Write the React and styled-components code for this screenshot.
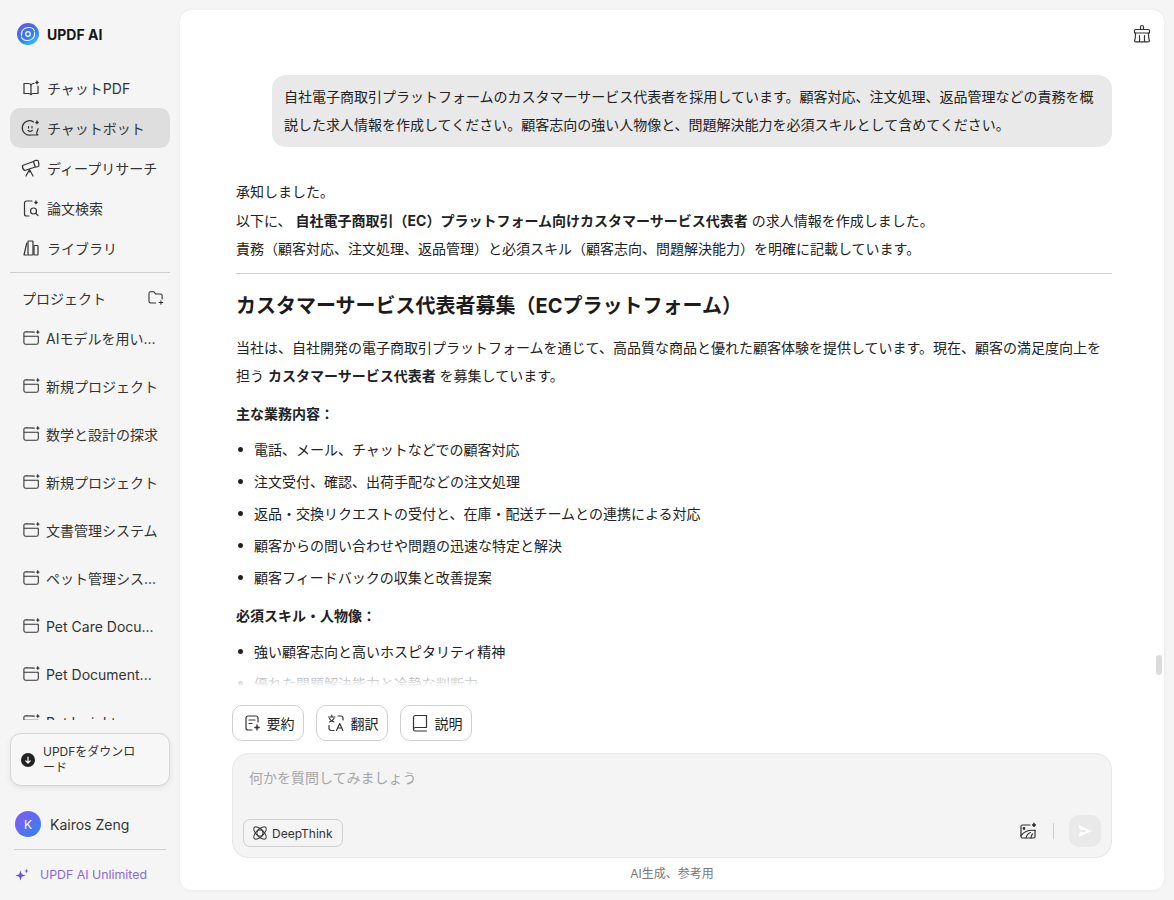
import React from "react";
import styled, { createGlobalStyle } from "styled-components";

const Global = createGlobalStyle`
  html, body { margin: 0; padding: 0; height: 100%; }
  body {
    background: #f5f5f5;
    color: #222222;
    font-family: "Inter", "Noto Sans CJK JP", sans-serif;
    font-size: 14px;
    overflow: hidden;
  }
  * { box-sizing: border-box; }
`;

const Page = styled.div`
  display: flex;
  width: 1174px;
  height: 900px;
`;

const Sidebar = styled.aside`
  width: 180px;
  height: 900px;
  flex: none;
  display: flex;
  flex-direction: column;
  padding: 0 10px;
`;

const Brand = styled.div`
  height: 68px;
  display: flex;
  align-items: center;
  gap: 7px;
  padding-left: 6px;
  font-size: 14px;
  font-weight: 700;
  color: #161616;
`;

const Nav = styled.nav`
  display: flex;
  flex-direction: column;
`;

const NavItem = styled.div`
  height: 40px;
  display: flex;
  align-items: center;
  gap: 6px;
  padding-left: 11px;
  border-radius: 10px;
  color: #333333;
  white-space: nowrap;
  background: ${(p) => (p.$active ? "#dedede" : "transparent")};
`;

const Rule = styled.div`
  height: 1px;
  flex: none;
  background: #cfcfcf;
  margin: ${(p) => p.$margin};
`;

const ProjectHead = styled.div`
  height: 20px;
  display: flex;
  align-items: center;
  justify-content: space-between;
  padding: 0 5px 0 12px;
  margin-top: 15px;
  font-size: 14px;
  color: #333333;
`;

const ProjectList = styled.div`
  height: 406px;
  flex: none;
  margin-top: 6px;
  overflow: hidden;
  display: flex;
  flex-direction: column;
`;

const ProjectItem = styled.div`
  height: 48px;
  flex: none;
  display: flex;
  align-items: center;
  gap: 5px;
  padding-left: 13px;
  color: #333333;
  white-space: nowrap;
`;

const Download = styled.div`
  height: 53px;
  flex: none;
  margin-top: 13px;
  display: flex;
  align-items: center;
  gap: 8px;
  padding: 0 28px 0 10px;
  border: 1px solid #d6d6d6;
  border-radius: 11px;
  background: #f7f7f7;
  box-shadow: 0 2px 6px rgba(0, 0, 0, 0.08);
  font-size: 12px;
  line-height: 16px;
  color: #333333;
`;

const DownloadDot = styled.span`
  width: 14px;
  height: 14px;
  flex: none;
  border-radius: 50%;
  background: #222222;
  display: flex;
  align-items: center;
  justify-content: center;
`;

const Profile = styled.div`
  height: 26px;
  flex: none;
  margin-top: 25px;
  display: flex;
  align-items: center;
  gap: 9px;
  padding-left: 5px;
  color: #333333;
  font-size: 14px;
`;

const Avatar = styled.span`
  width: 26px;
  height: 26px;
  border-radius: 50%;
  background: linear-gradient(135deg, #8a55f5, #2a86ee);
  color: #ffffff;
  font-size: 12px;
  display: flex;
  align-items: center;
  justify-content: center;
`;

const Unlimited = styled.div`
  display: flex;
  align-items: center;
  gap: 11px;
  padding-left: 5px;
  font-size: 12.35px;
  color: #8a68e4;
`;

const Main = styled.main`
  position: relative;
  width: 984px;
  height: 880px;
  margin-top: 10px;
  flex: none;
  background: #ffffff;
  border-radius: 12px;
  box-shadow: 0 0 4px rgba(0, 0, 0, 0.05);
  display: flex;
  flex-direction: column;
  padding: 0 52px;
`;

const CleanButton = styled.button`
  position: absolute;
  top: 14px;
  right: 12px;
  padding: 0;
  border: 0;
  background: none;
  display: flex;
`;

const Thumb = styled.div`
  position: absolute;
  top: 645px;
  right: 2px;
  width: 6px;
  height: 20px;
  border-radius: 3px;
  background: #dcdcdc;
`;

const Scroller = styled.div`
  position: relative;
  height: 680px;
  flex: none;
  overflow: hidden;
  padding: 65px 0 0 4px;
`;

const Fade = styled.div`
  position: absolute;
  left: 0;
  right: 0;
  bottom: 0;
  height: 32px;
  background: linear-gradient(rgba(255, 255, 255, 0), #ffffff 90%);
`;

const Bubble = styled.div`
  margin-left: 36px;
  padding: 8px 12px;
  background: #e9e9e9;
  border-radius: 14px;
  line-height: 28px;
  color: #222222;
`;

const Answer = styled.div`
  margin-top: 31px;
`;

const Intro = styled.p`
  margin: 0;
  line-height: 28.5px;
`;

const Divider = styled.hr`
  margin: 9px 0 0;
  border: 0;
  height: 1px;
  background: #cfcfcf;
`;

const Heading = styled.h2`
  margin: 17px 0 0;
  font-size: 20px;
  line-height: 30px;
  font-weight: 700;
  color: #1c1c1c;
`;

const Para = styled.p`
  margin: 13px 0 0;
  line-height: 28px;
`;

const Label = styled.p`
  margin: ${(p) => p.$top}px 0 0;
  line-height: 24px;
  font-weight: 700;
`;

const Bullets = styled.ul`
  margin: 8px 0 0;
  padding: 0 0 0 18px;
  list-style: none;
`;

const Bullet = styled.li`
  position: relative;
  line-height: 32px;
  &::before {
    content: "";
    position: absolute;
    left: -16px;
    top: 13px;
    width: 5px;
    height: 5px;
    border-radius: 50%;
    background: #222222;
  }
`;

const Actions = styled.div`
  display: flex;
  gap: 12px;
  height: 36px;
  flex: none;
  margin-top: 15px;
`;

const ActionButton = styled.button`
  width: 72px;
  height: 36px;
  padding: 0;
  border: 1px solid #cfcfcf;
  border-radius: 10px;
  background: #ffffff;
  color: #222222;
  font: inherit;
  display: flex;
  align-items: center;
  justify-content: center;
  gap: 5px;
`;

const Composer = styled.div`
  height: 105px;
  flex: none;
  margin-top: 12px;
  padding: 14px 10px 10px;
  display: flex;
  flex-direction: column;
  justify-content: space-between;
  border: 1px solid #e8e8e8;
  border-radius: 16px;
  background: #f4f4f4;
`;

const Placeholder = styled.div`
  padding-left: 6px;
  color: #a6a6a6;
  line-height: 20px;
`;

const ComposerBar = styled.div`
  display: flex;
  align-items: flex-end;
  justify-content: space-between;
`;

const DeepThink = styled.button`
  height: 28px;
  padding: 0 9px 0 8px;
  border: 1px solid #cfcfcf;
  border-radius: 7px;
  background: #f4f4f4;
  color: #333333;
  font: inherit;
  font-size: 12px;
  display: flex;
  align-items: center;
  gap: 4px;
`;

const Tools = styled.div`
  display: flex;
  align-items: center;
  gap: 15px;
`;

const ToolRule = styled.span`
  width: 1px;
  height: 16px;
  background: #cdcdcd;
`;

const Send = styled.button`
  width: 32px;
  height: 32px;
  padding: 0;
  border: 0;
  border-radius: 10px;
  background: #e9e9e9;
  display: flex;
  align-items: center;
  justify-content: center;
`;

const Note = styled.div`
  margin-top: 8px;
  text-align: center;
  font-size: 12px;
  line-height: 16px;
  color: #777777;
`;

const Ico = ({ size = 20, children }) => (
  <svg width={size} height={size} viewBox="0 0 20 20" fill="none" stroke="#333" strokeWidth="1.2" strokeLinecap="round" strokeLinejoin="round" style={{ flex: "none" }}>
    {children}
  </svg>
);

const Spark = ({ x = 16, y = 4, r = 1.7 }) => (
  <path d={`M${x} ${y - r}l${r * 0.45} ${r * 0.55} ${r * 0.55} ${r * 0.45}-${r * 0.55} ${r * 0.45}-${r * 0.45} ${r * 0.55}-${r * 0.45}-${r * 0.55}-${r * 0.55}-${r * 0.45} ${r * 0.55}-${r * 0.45}z`} fill="#333" stroke="#333" strokeWidth="0.6" />
);

const Logo = () => (
  <svg width="24" height="24" viewBox="0 0 24 24" fill="none" style={{ flex: "none" }}>
    <defs>
      <linearGradient id="lg" x1="0.1" y1="0" x2="0.8" y2="1">
        <stop offset="0" stopColor="#6a55e8" />
        <stop offset="0.6" stopColor="#2f7cf5" />
        <stop offset="1" stopColor="#3fc0fa" />
      </linearGradient>
      <filter id="soft" x="-10%" y="-10%" width="120%" height="120%">
        <feGaussianBlur stdDeviation="0.6" />
      </filter>
    </defs>
    <circle cx="12" cy="12" r="11" fill="url(#lg)" filter="url(#soft)" />
    <path d="M5.500 13.500C4.500 8.500 9 5 13.500 5.500c2.500.3 4.500 1.800 5 3.500" stroke="#e6f4ff" strokeWidth="1.1" strokeLinecap="round" />
    <path d="M18.500 10.500c1 5-3.500 8.500-8 8-2.500-.3-4.500-1.800-5-3.500" stroke="#e6f4ff" strokeWidth="1.1" strokeLinecap="round" />
    <circle cx="12" cy="12" r="2.300" stroke="#ffffff" strokeWidth="1.2" />
  </svg>
);

const BookIcon = () => (
  <Ico>
    <path d="M13 5.500h-.5c-1 0-2 .6-2.500 1.600-.5-1-1.500-1.600-2.500-1.600H3V15.500h4.500c1 0 2 .4 2.500 1 .5-.6 1.500-1 2.500-1H17V8" />
    <path d="M10 7.100v9.400" />
    <Spark x={16} y={4.500} />
  </Ico>
);
const BotIcon = () => (
  <Ico>
    <path d="M12.500 4A7.200 7.200 0 1 0 10 17h7c-1-.7-1.500-1.600-1.300-2.700.7-1 1.200-2.200 1.300-3.600" />
    <path d="M7.500 8.500v1.500M11 8.500v1.500M7 12.500c1.300 1 3 1 4.300 0" />
    <Spark x={16} y={4.500} />
  </Ico>
);
const ScopeIcon = () => (
  <Ico>
    <path d="M1.500 7.500l11-4 1.800 5.500-10.500 3.500c-1.500-.8-2.500-3-2.300-5z" />
    <path d="M12.500 3.500c1-1 3.500-1.500 4.500-1 .8 1.600 1.200 4 .8 5.600-.8.700-2 1-3.500.9" />
    <path d="M8.500 11.500L5 18M8.500 11.500L12 18M8.500 11.500v2.500" />
  </Ico>
);
const SearchDocIcon = () => (
  <Ico>
    <path d="M11 3H5.500a2 2 0 0 0-2 2v11a2 2 0 0 0 2 2H8" />
    <circle cx="12.500" cy="13" r="3" />
    <path d="M14.800 15.300l2.200 2.200" />
    <Spark x={15} y={4.500} />
  </Ico>
);
const LibraryIcon = () => (
  <Ico>
    <path d="M5.800 5L3 17h3.200" />
    <rect x="7" y="3" width="5" height="14" rx="0.700" />
    <rect x="13" y="7.500" width="4" height="9.500" rx="0.700" />
  </Ico>
);
const FolderSpark = () => (
  <Ico size={18}>
    <path d="M12.500 3.500L3 3a2 2 0 0 0-2 2v10a2 2 0 0 0 2 2h12a2 2 0 0 0 2-2V8H1" />
    <Spark x={16.500} y={3.500} r={1.700} />
  </Ico>
);
const FolderPlus = () => (
  <Ico size={18}>
    <path d="M9.500 15.500H4a1.800 1.800 0 0 1-1.800-1.800v-9A1.800 1.800 0 0 1 4 3h3.500l2 2.500H15A1.800 1.800 0 0 1 16.800 7.300V11" />
    <path d="M15.500 13v4M13.500 15h4" />
  </Ico>
);
const ArrowDown = () => (
  <svg width="8" height="8" viewBox="0 0 8 8" fill="none" stroke="#fff" strokeWidth="1.200" strokeLinecap="round" strokeLinejoin="round">
    <path d="M4 1v6M1.800 4.800L4 7l2.200-2.200" />
  </svg>
);
const Sparkles = () => (
  <svg width="14" height="14" viewBox="0 0 14 14" fill="#6d4fe0" style={{ flex: "none" }}>
    <path d="M5.500 2.500l1.300 3.700 3.700 1.300-3.700 1.300-1.300 3.700-1.300-3.700L.5 7.500l3.700-1.300z" />
    <path d="M11.500 .8l.6 1.600 1.600.6-1.600.6-.6 1.600-.6-1.600-1.600-.6 1.600-.6z" />
  </svg>
);
const BroomIcon = () => (
  <Ico size={20}>
    <path d="M8.500 5.500V3a1.500 1.500 0 0 1 3 0v2.500" />
    <path d="M3.500 5.500h13a1 1 0 0 1 1 1V9h-15V6.500a1 1 0 0 1 1-1z" />
    <path d="M3.500 9c.2 3-.2 5.800-.9 8 .1.500.4.800 1 .8h12.800c.6 0 .9-.3 1-.8-.7-2.200-1.100-5-.9-8" />
    <path d="M7.500 11.500v6M12.500 11.500v6" />
  </Ico>
);
const SummaryIcon = () => (
  <Ico size={20}>
    <path d="M16 9V5a2 2 0 0 0-2-2H6a2 2 0 0 0-2 2v10a2 2 0 0 0 2 2h4" />
    <path d="M7 7h6M7 10.500h3" />
    <path d="M15 11.500l.8 2.200 2.200.8-2.200.8-.8 2.200-.8-2.200-2.200-.8 2.200-.8z" fill="#333" strokeWidth="0.500" />
  </Ico>
);
const TranslateIcon = () => (
  <Ico size={20}>
    <path d="M2.500 4h6.500M5.800 2.200V4M3.500 5.500c.7 1.500 2.700 3 4.500 3.500M8 5.500C7.300 7 5.300 8.500 3.500 9" />
    <path d="M12 3h3a2 2 0 0 1 2 2v2" />
    <path d="M8 17.500H5a2 2 0 0 1-2-2v-3" />
    <path d="M10.500 17.500l3.200-7 3.200 7M11.700 15h4" />
  </Ico>
);
const ExplainIcon = () => (
  <Ico size={20}>
    <path d="M3.500 16V4.500a2 2 0 0 1 2-2h11v12H5.500a2 2 0 0 0-2 2 1.500 1.500 0 0 0 1.500 1.500h11.500" />
  </Ico>
);
const AtomIcon = () => (
  <Ico size={16}>
    <ellipse cx="10" cy="10" rx="4.500" ry="10" transform="rotate(45 10 10)" />
    <ellipse cx="10" cy="10" rx="4.500" ry="10" transform="rotate(-45 10 10)" />
    <circle cx="10" cy="10" r="4" />
  </Ico>
);
const ImageIcon = () => (
  <Ico size={20}>
    <path d="M12 4H4.500A1.500 1.500 0 0 0 3 5.500v10A1.500 1.500 0 0 0 4.500 17h11a1.500 1.500 0 0 0 1.500-1.500V9" />
    <path d="M3 14.500c3-3.500 8-6 14-5M8 17c.5-2.500 2-4.500 4.500-5.500M13 17c0-1.500 .5-3 1.500-4" />
    <circle cx="6" cy="7.500" r="0.800" fill="#333" />
    <Spark x={16} y={4} r={2} />
  </Ico>
);
const PlaneIcon = () => (
  <svg width="16" height="16" viewBox="0 0 16 16" fill="#ffffff">
    <path d="M1.500 2l13.500 6-13.500 6 1.500-5h5.500V7H3z" />
  </svg>
);

const navItems = [
  { label: "チャットPDF", icon: <BookIcon /> },
  { label: "チャットボット", icon: <BotIcon />, active: true },
  { label: "ディープリサーチ", icon: <ScopeIcon /> },
  { label: "論文検索", icon: <SearchDocIcon /> },
  { label: "ライブラリ", icon: <LibraryIcon /> },
];

const projects = [
  "AIモデルを用い...",
  "新規プロジェクト",
  "数学と設計の探求",
  "新規プロジェクト",
  "文書管理システム",
  "ペット管理シス...",
  "Pet Care Docu...",
  "Pet Document...",
  "Pet Insights",
];

const duties = [
  "電話、メール、チャットなどでの顧客対応",
  "注文受付、確認、出荷手配などの注文処理",
  "返品・交換リクエストの受付と、在庫・配送チームとの連携による対応",
  "顧客からの問い合わせや問題の迅速な特定と解決",
  "顧客フィードバックの収集と改善提案",
];

const skills = ["強い顧客志向と高いホスピタリティ精神", "優れた問題解決能力と冷静な判断力"];

export default function App() {
  return (
    <Page>
      <Global />
      <Sidebar>
        <Brand>
          <Logo />
          UPDF AI
        </Brand>
        <Nav>
          {navItems.map((item) => (
            <NavItem key={item.label} $active={item.active}>
              {item.icon}
              {item.label}
            </NavItem>
          ))}
        </Nav>
        <Rule $margin="4px 0 0" />
        <ProjectHead>
          プロジェクト
          <FolderPlus />
        </ProjectHead>
        <ProjectList>
          {projects.map((name, i) => (
            <ProjectItem key={i}>
              <FolderSpark />
              {name}
            </ProjectItem>
          ))}
        </ProjectList>
        <Download>
          <DownloadDot>
            <ArrowDown />
          </DownloadDot>
          UPDFをダウンロード
        </Download>
        <Profile>
          <Avatar>K</Avatar>
          Kairos Zeng
        </Profile>
        <Rule $margin="12px 4px 17px" />
        <Unlimited>
          <Sparkles />
          UPDF AI Unlimited
        </Unlimited>
      </Sidebar>
      <Main>
        <CleanButton>
          <BroomIcon />
        </CleanButton>
        <Thumb />
        <Scroller>
          <Bubble>
            自社電子商取引プラットフォームのカスタマーサービス代表者を採用しています。顧客対応、注文処理、返品管理などの責務を概説した求人情報を作成してください。顧客志向の強い人物像と、問題解決能力を必須スキルとして含めてください。
          </Bubble>
          <Answer>
            <Intro>承知しました。</Intro>
            <Intro>
              以下に、 <b>自社電子商取引（EC）プラットフォーム向けカスタマーサービス代表者</b> の求人情報を作成しました。
            </Intro>
            <Intro>責務（顧客対応、注文処理、返品管理）と必須スキル（顧客志向、問題解決能力）を明確に記載しています。</Intro>
            <Divider />
            <Heading>カスタマーサービス代表者募集（ECプラットフォーム）</Heading>
            <Para>
              当社は、自社開発の電子商取引プラットフォームを通じて、高品質な商品と優れた顧客体験を提供しています。現在、顧客の満足度向上を担う <b>カスタマーサービス代表者</b> を募集しています。
            </Para>
            <Label $top={12}>主な業務内容：</Label>
            <Bullets>
              {duties.map((d) => (
                <Bullet key={d}>{d}</Bullet>
              ))}
            </Bullets>
            <Label $top={10}>必須スキル・人物像：</Label>
            <Bullets>
              {skills.map((s) => (
                <Bullet key={s}>{s}</Bullet>
              ))}
            </Bullets>
          </Answer>
          <Fade />
        </Scroller>
        <Actions>
          <ActionButton>
            <SummaryIcon />
            要約
          </ActionButton>
          <ActionButton>
            <TranslateIcon />
            翻訳
          </ActionButton>
          <ActionButton>
            <ExplainIcon />
            説明
          </ActionButton>
        </Actions>
        <Composer>
          <Placeholder>何かを質問してみましょう</Placeholder>
          <ComposerBar>
            <DeepThink>
              <AtomIcon />
              DeepThink
            </DeepThink>
            <Tools>
              <ImageIcon />
              <ToolRule />
              <Send>
                <PlaneIcon />
              </Send>
            </Tools>
          </ComposerBar>
        </Composer>
        <Note>AI生成、参考用</Note>
      </Main>
    </Page>
  );
}
